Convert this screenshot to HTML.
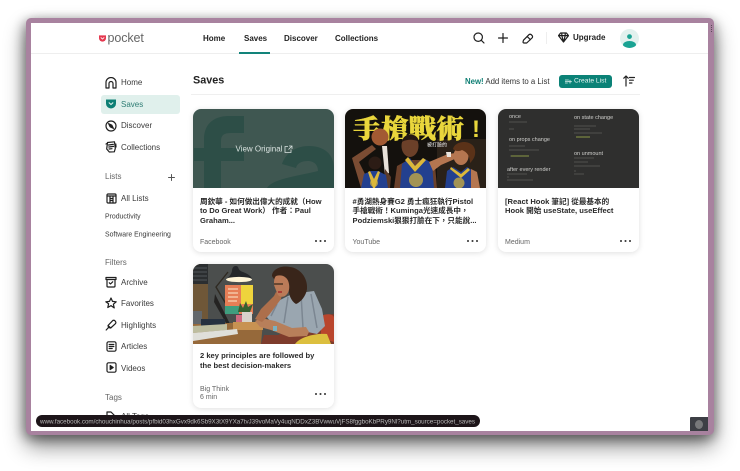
<!DOCTYPE html>
<html lang="zh-Hant"><head><meta charset="utf-8"><title>Pocket Saves</title>
<style>
*{box-sizing:border-box;margin:0;padding:0}
html,body{width:740px;height:471px;background:#fff;overflow:hidden;font-family:"Liberation Sans","Noto Sans CJK TC",sans-serif}
#win{position:absolute;left:26px;top:18px;width:688px;height:417px;background:#a8829f;border-radius:5px;box-shadow:0 11px 22px rgba(0,0,0,.48),-3px 3px 12px rgba(0,0,0,.3),3px 3px 12px rgba(0,0,0,.2)}
#page{position:absolute;left:31px;top:23px;width:677px;height:408px;background:#fff;overflow:hidden}
#root{position:absolute;left:0;top:0;width:740px;height:471px;filter:blur(.33px)}
.t{position:absolute;white-space:nowrap;line-height:1;transform:translateY(-50%)}
.nav{font-size:8px;font-weight:700;color:#222}
.side{font-size:8px;color:#3a3a3a;left:121px}
.head{font-size:8px;color:#666;left:105px}
.small{font-size:6.9px;color:#3a3a3a;left:105px}
.ic{position:absolute;fill:none;stroke:#1f1f1f;stroke-width:1.2;stroke-linecap:round;stroke-linejoin:round}
.card{position:absolute;width:141px;background:#fff;border-radius:8px;box-shadow:0 1px 6px rgba(0,0,0,.13);overflow:hidden}
.card svg.im{position:absolute;left:0;top:0;display:block}
.title{position:absolute;left:7.5px;top:87.3px;white-space:nowrap;font-size:7.6px;line-height:9.7px;font-weight:700;color:#2a2a2a}
.src{position:absolute;left:7.5px;font-size:7px;color:#666;line-height:8.5px}
.dots{position:absolute;right:8px;width:11px;height:2px;background:radial-gradient(circle at 1px 1px,#444 1px,transparent 1.1px) 0 0/4.5px 2px repeat-x}
</style></head><body>
<div id="root">
<div id="win"></div>
<div id="page"></div>
<!-- header -->
<div style="position:absolute;left:31px;top:52.5px;width:677px;height:1.5px;background:#eeeeee"></div>
<svg style="position:absolute;left:99px;top:35px" width="7" height="7" viewBox="0 0 8 8"><path d="M0 .4h8v3.2a4 4 0 0 1-8 0z" fill="#e5384f"/><path d="M2 2.8l2 1.8 2-1.8" fill="none" stroke="#fff" stroke-width="1"/></svg>
<div class="t" style="left:107.5px;top:37.5px;font-size:12.5px;color:#666;letter-spacing:-.1px">pocket</div>
<div class="t nav" style="left:203px;top:38.5px">Home</div>
<div class="t nav" style="left:244px;top:38.5px">Saves</div>
<div class="t nav" style="left:284px;top:38.5px">Discover</div>
<div class="t nav" style="left:335px;top:38.5px">Collections</div>
<div style="position:absolute;left:239px;top:51.5px;width:31px;height:2px;background:#12837a"></div>
<svg class="ic" style="left:473px;top:32px" width="12" height="12" viewBox="0 0 12 12"><circle cx="5.2" cy="5.2" r="4.2"/><path d="M8.3 8.3L11 11"/></svg>
<svg class="ic" style="left:498px;top:33px" width="10" height="10" viewBox="0 0 10 10"><path d="M5 .5v9M.5 5h9"/></svg>
<svg class="ic" style="left:522px;top:33px" width="12" height="11" viewBox="0 0 12 11"><path d="M1.5 7.2L6.8 1.8a1.8 1.8 0 0 1 2.6 0l.6.6a1.8 1.8 0 0 1 0 2.6L4.7 10H2a1 1 0 0 1-1-1zM5.2 3.5l3.2 3.2"/></svg>
<div style="position:absolute;left:546px;top:32px;width:1px;height:12px;background:#eee"></div>
<svg class="ic" style="left:558px;top:32px" width="11" height="11" viewBox="0 0 11 11"><path d="M2.6 1h5.8L10.5 3.6 5.500 10 .5 3.6zM.5 3.6h10M3.8 3.6L5.500 10l1.700-6.400M3.800 1v2.600M7.200 1v2.600"/></svg>
<div class="t nav" style="left:573px;top:38px">Upgrade</div>
<svg style="position:absolute;left:620px;top:29px" width="19" height="19" viewBox="0 0 19 19"><defs><clipPath id="av"><circle cx="9.5" cy="9.5" r="9.5"/></clipPath></defs><circle cx="9.5" cy="9.5" r="9.5" fill="#e2f1ee"/><g clip-path="url(#av)" fill="#1aa393"><circle cx="9.5" cy="7.6" r="2.4"/><ellipse cx="9.5" cy="16" rx="6.5" ry="4"/></g></svg>
<!-- sidebar -->
<div style="position:absolute;left:101px;top:95px;width:79px;height:19px;background:#e0f0ec;border-radius:3px"></div>
<svg class="ic" style="left:105px;top:77px" width="12" height="12" viewBox="0 0 12 12"><path d="M1 11V5.5a5 5 0 0 1 10 0V11H8V6.5a2 2 0 0 0-4 0V11z"/></svg>
<svg style="position:absolute;left:106px;top:99px" width="10" height="10" viewBox="0 0 10 10"><path d="M0 .5h10v4a5 5 0 0 1-10 0z" fill="#0c7f74"/><path d="M2.800 3.500L5 5.500l2.200-2" fill="none" stroke="#e0f0ec" stroke-width="1.100"/></svg>
<svg class="ic" style="left:105px;top:120px" width="12" height="12" viewBox="0 0 12 12"><circle cx="6" cy="6" r="5"/><path d="M3.600 3.600l3.200 1.600 1.600 3.200-3.200-1.600z" fill="#1f1f1f"/></svg>
<svg class="ic" style="left:105px;top:141px" width="12" height="12" viewBox="0 0 12 12"><path d="M2.500 1.500l7-.7.8 6.600-1 3.400-5 .2L1.700 8z"/><path d="M3.500 4l4.800-.6M3.800 6l4.800-.6M4 8l3-.3M1 3l1.400-.7M10.800 3L11 6"/></svg>
<div class="t side" style="top:83px">Home</div>
<div class="t side" style="top:104.5px;color:#2f7d74">Saves</div>
<div class="t side" style="top:126px">Discover</div>
<div class="t side" style="top:147.5px">Collections</div>
<div class="t head" style="top:176.5px">Lists</div>
<svg class="ic" style="left:168px;top:174px;stroke:#555;stroke-width:1" width="7" height="7" viewBox="0 0 7 7"><path d="M3.500 .5v6M.5 3.500h6"/></svg>
<svg class="ic" style="left:106px;top:193px" width="11" height="11" viewBox="0 0 11 11"><rect x="1" y="1" width="9" height="9" rx="1"/><path d="M1 3h9M4 3v7M7 3v7M5 5.500h1M5 7.500h1"/></svg>
<div class="t side" style="top:198.5px">All Lists</div>
<div class="t small" style="top:218px">Productivity</div>
<div class="t small" style="top:236px">Software Engineering</div>
<div class="t head" style="top:263px">Filters</div>
<svg class="ic" style="left:105px;top:276px" width="12" height="12" viewBox="0 0 12 12"><path d="M1 1.500h10v2H1zM2 3.500V10a1 1 0 0 0 1 1h6a1 1 0 0 0 1-1V3.500M4.300 6.800L5.500 8l2.200-2.200"/></svg>
<div class="t side" style="top:282.5px">Archive</div>
<svg class="ic" style="left:105px;top:297px" width="12" height="12" viewBox="0 0 12 12"><path d="M6 1l1.500 3.400 3.700.4-2.800 2.400.8 3.700L6 8.600l-3.200 1.900.8-3.700L.8 4.800l3.700-.4z"/></svg>
<div class="t side" style="top:304px">Favorites</div>
<svg class="ic" style="left:105px;top:319px" width="12" height="12" viewBox="0 0 12 12"><path d="M3.500 8.500L3 6.500 7.500 1.800a1.600 1.600 0 0 1 2.400 0l.5.6a1.600 1.600 0 0 1 0 2.300L5.700 9zM3.500 8.500L1.200 11M3 6.500L5.700 9"/></svg>
<div class="t side" style="top:325.5px">Highlights</div>
<svg class="ic" style="left:106px;top:341px" width="11" height="11" viewBox="0 0 11 11"><rect x="1" y=".8" width="9" height="9.400" rx="1.500"/><path d="M3.200 3.500h4.600M3.200 5.500h4.600M3.200 7.500h3"/></svg>
<div class="t side" style="top:347px">Articles</div>
<svg class="ic" style="left:106px;top:362px" width="11" height="11" viewBox="0 0 11 11"><rect x="1" y=".8" width="9" height="9.400" rx="1.500"/><path d="M4.200 3.500l3 2-3 2z" fill="#1f1f1f"/></svg>
<div class="t side" style="top:368.5px">Videos</div>
<div class="t head" style="top:397.5px">Tags</div>
<svg class="ic" style="left:106px;top:411px" width="10" height="10" viewBox="0 0 10 10"><path d="M1 1h4l4 4-4 4-4-4z"/></svg>
<div class="t side" style="top:417px">All Tags</div>
<!-- main head -->
<div class="t" style="left:193px;top:80.5px;font-size:10.8px;font-weight:700;color:#222">Saves</div>
<div style="position:absolute;left:191px;top:94px;width:449px;height:1px;background:#efefef"></div>
<div class="t" style="left:465px;top:81.5px;font-size:7.8px;color:#333"><b style="color:#0f7f74">New!</b> Add items to a List</div>
<div style="position:absolute;left:559px;top:74.5px;width:53px;height:13px;background:#0b8277;border-radius:3px"></div>
<svg class="ic" style="left:565px;top:78.5px;stroke:#d8efeb;stroke-width:.8" width="7" height="5" viewBox="0 0 7 5"><path d="M0 1h3.500M0 2.500h3.500M0 4h2.500M5 1.200v3M3.500 2.700h3"/></svg>
<div class="t" style="left:574px;top:81.5px;font-size:6.7px;color:#e8f6f3">Create List</div>
<svg class="ic" style="left:623px;top:75px;stroke:#222" width="12" height="12" viewBox="0 0 12 12"><path d="M3 11V1M.8 3.200L3 1l2.200 2.200M6.500 2.500h5M6.500 5.200h3.800M6.500 8h2.400"/></svg>

<!-- card 1 -->
<div class="card" style="left:192.5px;top:109.3px;height:143px">
<svg class="im" width="141" height="79" viewBox="0 0 141 79"><rect width="141" height="79" fill="#3f5751"/>
<path d="M11 79V52H1V39H11V30C11 14 22 7 36 7H51V24H38C31 24 28 26 28 32V39H51V52H28V79z" fill="#2d4e47"/>
<path d="M89 55C93 43 104 37 116 37C131 37 141 45 141 60V79H74C80 70 100 68 125 62C125 55 120 52 115 52C109 52 104 54 103 59z" fill="#2d4e47"/>
<text x="42.500" y="42.500" font-size="8" fill="#d9e2df" font-family="Liberation Sans">View Original</text>
<path d="M95 37.500h-3v6h6v-3M95.500 40.500l3-3M96 37h3v3" fill="none" stroke="#d9e2df" stroke-width=".8"/></svg>
<div class="title">周欽華 - 如何做出偉大的成就（How<br>to Do Great Work） 作者：Paul<br>Graham...</div>
<div class="src" style="top:130px">Facebook</div><div class="dots" style="top:131px"></div>
</div>
<!-- card 2 -->
<div class="card" style="left:345px;top:109.3px;height:143px">
<svg class="im" width="141" height="79" viewBox="0 0 141 79"><rect width="141" height="79" fill="#14110d"/>
<rect x="92" y="30" width="49" height="49" fill="#2a2118"/>
<text x="8" y="29" font-size="26" font-weight="900" fill="#e9d63c" font-family="Noto Serif CJK SC" stroke="#e9d63c" stroke-width=".5" textLength="111" lengthAdjust="spacingAndGlyphs">手槍戰術</text>
<text x="127" y="28" font-size="24" font-weight="700" fill="#e9d63c" font-family="Liberation Sans">!</text>
<text x="82" y="37.500" font-size="5" fill="#eee" font-family="Noto Sans CJK TC">被打臉的</text>
<!-- left player -->
<path d="M7 49L27 36l4 4-17 13 6 12 4 14h-8z" fill="#7a4c33"/>
<circle cx="35" cy="28" r="8.500" fill="#a25a33"/>
<path d="M37 37h5l2 27-4 2z" fill="#e8e2da"/>
<path d="M40 60l6 8-1 11h-6z" fill="#5a3a2a"/>
<circle cx="30" cy="54" r="6.500" fill="#2c1c15"/>
<path d="M16 79l3-14 7-3h7l8 4 2 13z" fill="#23408f"/><path d="M25 62l4 8 4-8 2 1-5 16h-2l-5-16z" fill="#dcb83a"/><circle cx="29" cy="74" r="4" fill="#d9b73a" opacity=".7"/>
<!-- middle player -->
<path d="M49 79l3-22 11-6h12l15 5 2 23z" fill="#6b412b"/>
<ellipse cx="65" cy="37" rx="8.500" ry="11" fill="#6b4029"/><path d="M57 33c1-10 16-10 17 0-4-3-13-3-17 0" fill="#241712"/>
<path d="M55 79l2-24 8-6 5 8 8-8 9 5 2 25z" fill="#23408f"/><path d="M63 48l7 9 8-8 3 2-11 12-10-12z" fill="#dcb83a"/><circle cx="71" cy="71" r="7" fill="#d9b73a" opacity=".7"/>
<!-- right player -->
<path d="M84 53l19-8 8-1 1 5-16 7-8 6z" fill="#b57650"/>
<path d="M101 43h5v5h-4z" fill="#ece6de"/>
<ellipse cx="116" cy="47" rx="7.500" ry="9" fill="#b57650"/><path d="M108 40c2-9 20-10 22 1 1 6-2 10-5 13 0-7-3-11-8-13-4 2-7 1-9-1" fill="#5b3218"/>
<path d="M100 79l2-17 6-4 8 5 6-5 5 3 1 18z" fill="#23408f"/><path d="M106 58l10 7 7-6 2 2-9 8-11-9z" fill="#dcb83a"/><circle cx="114" cy="74" r="5.500" fill="#d9b73a" opacity=".7"/>
<path d="M126 60l6 3 3 16h-9z" fill="#b57650"/>
</svg>
<div class="title">#勇湖熱身賽G2 勇士瘋狂執行Pistol<br>手槍戰術！Kuminga光速成長中，<br>Podziemski狠狠打臉在下，只能說...</div>
<div class="src" style="top:130px">YouTube</div><div class="dots" style="top:131px"></div>
</div>
<!-- card 3 -->
<div class="card" style="left:497.5px;top:109.3px;height:143px">
<svg class="im" width="141" height="79" viewBox="0 0 141 79" font-family="Liberation Sans"><rect width="141" height="79" fill="#2f2f2e"/>
<g font-size="5.500" fill="#cfcfcc"><text x="11" y="9">once</text><text x="76" y="10">on state change</text><text x="11" y="32">on props change</text><text x="76" y="46">on unmount</text><text x="9" y="62">after every render</text></g>
<g stroke="#5e5e5b" stroke-width=".8"><path d="M11 13h18M11 20h5M11 37h16M11 41h30M12 47h18M76 17h22M76 20h16M76 24h28M76 49h20M76 53h14M76 57h26M76 62h2M76 65h10M9 65h20M9 68h2M9 71h26"/></g>
<path d="M13 47h18M78 28h14" stroke="#8b9a45" stroke-width="1"/>
</svg>
<div class="title">[React Hook 筆記] 從最基本的<br>Hook 開始 useState, useEffect</div>
<div class="src" style="top:130px">Medium</div><div class="dots" style="top:131px"></div>
</div>
<!-- card 4 -->
<div class="card" style="left:192.5px;top:264px;height:143.5px">
<svg class="im" width="141" height="80" viewBox="0 0 141 80"><rect width="141" height="80" fill="#4b4e4d"/>
<rect width="15" height="62" fill="#6f5738"/><rect width="15" height="20" fill="#2b2e30"/>
<path d="M0 4h14M0 8h14M0 12h14M0 16h14" stroke="#50555a" stroke-width="1"/>
<path d="M35 8L23 23l10 17" stroke="#2f2a22" stroke-width="1.400" fill="none"/>
<path d="M33 15c3-2 5-4 6-8 0-5 4-6 6-4 1 3 2 4 5 5 5 2 8 4 9 7z" fill="#25272a"/>
<ellipse cx="46" cy="15.500" rx="13" ry="2.600" fill="#fff5d8"/>
<rect x="32" y="21" width="28" height="29" fill="#e67e56"/><rect x="48" y="21" width="12" height="19" fill="#eed43c"/><rect x="32" y="42" width="14" height="8" fill="#3f9e7e"/>
<path d="M35 25h10M35 29h10M35 33h10M35 37h9" stroke="#f4c5a5" stroke-width="1.500"/>
<path d="M22 30L38 62l2 3-3 1L21 38z" fill="#242322"/>
<path d="M45 48l2-9 3 5 3-7 2 6 5-3-3 8z" fill="#36602f"/>
<path d="M49 48h10v10H49z" fill="#d8d3ca"/><path d="M43 51h6v7h-6z" fill="#cf6a7f"/>
<path d="M0 80V60l70-2-2 22z" fill="#96693a"/><path d="M40 58h30v8H40z" fill="#c89252"/>
<path d="M0 47h9v13H0z" fill="#62676b"/><path d="M8 55h24v7H8z" fill="#26313f"/>
<path d="M0 62l34-2v6L0 69z" fill="#bdbd9f"/><path d="M0 69l44-4 1 5L0 77z" fill="#dfdfd9"/>
<path d="M68 80l3-9 14 0 45-20 11-1v30z" fill="#7e3c2c"/>
<path d="M128 52c6-3 13-2 13 2v24l-13-4z" fill="#b9452c"/>
<path d="M102 80c5-7 20-11 32-10l4 10z" fill="#dcbf3e"/>
<path d="M73 52l10-14 16-8 22-3 8 18 3 17-8 8-14-3-14-1-10-7-9-2z" fill="#9aa6b0"/>
<path d="M95 33l-4 26M108 30l2 34M118 30l6 34M84 40l-6 12" stroke="#6f7985" stroke-width="1.500" opacity=".7"/>
<path d="M62 57l6-3 14 3 17 7 14-1 3 5-2 4-18 1-18-7-11-3z" fill="#b87f5a"/>
<path d="M62 55l6-10 13-13 2-4 6 3-1 4-12 16-7 7z" fill="#ad6f4b"/>
<rect x="80" y="62" width="4" height="5" fill="#7bb2c2"/>
<path d="M79 12c0-7 10-11 18-9 10 1 18 11 17 22-1 7-6 13-11 15-5-3-8-10-7-17-2-5-6-6-9-5-3 0-6-2-8-6z" fill="#39251a"/>
<path d="M83 12c6-2 12 1 13 8 1 6-1 10-4 12-4 2-7 0-8-3l-3-8c0-4 0-7 2-9z" fill="#bb7b58"/>
<path d="M81 20h9" stroke="#3a2a1c" stroke-width="1.200"/><path d="M85 28h4" stroke="#a52a2a" stroke-width="1.500"/>
</svg>
<div class="title">2 key principles are followed by<br>the best decision-makers</div>
<div class="src" style="top:121.5px;line-height:8.7px">Big Think<br>6 min</div><div class="dots" style="top:129px"></div>
</div>
<!-- tooltip -->
<div style="position:absolute;left:36px;top:415px;width:444px;height:12px;background:#1d1519;border-radius:6px"></div>
<svg style="position:absolute;left:36px;top:415px" width="444" height="12"><text x="4" y="8.300" font-size="6.300" fill="#b9b9b9" font-family="Liberation Sans" textLength="435" lengthAdjust="spacing">www.facebook.com/chouchinhua/posts/pfbid03hxGvx9dk6Sb9X3tX9YXa7tvJ39voMaVy4uqNDDxZ3BVwwuVjFS8fggboKbPRy9Nl?utm_source=pocket_saves</text></svg>
<div style="position:absolute;left:690px;top:417px;width:18px;height:14px;background:#3d3f45;border-radius:1px 0 0 0"></div>
<div style="position:absolute;left:695px;top:419.5px;width:8px;height:9px;background:#77787a;border-radius:50%"></div>
<div style="position:absolute;left:710.5px;top:25px;width:1.5px;height:7px;background:repeating-linear-gradient(#5b4a58 0 1px,transparent 1px 2px)"></div>
</div>
</body></html>
